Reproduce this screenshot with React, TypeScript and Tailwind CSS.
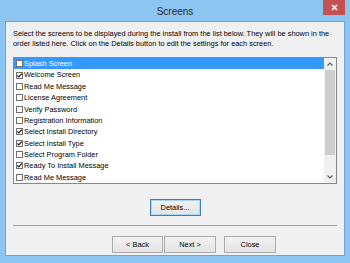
import { ReactNode } from "react";

type Screen = { name: string; checked: boolean };

const screens: Screen[] = [
  { name: "Splash Screen", checked: false },
  { name: "Welcome Screen", checked: true },
  { name: "Read Me Message", checked: false },
  { name: "License Agreement", checked: false },
  { name: "Verify Password", checked: false },
  { name: "Registration Information", checked: false },
  { name: "Select Install Directory", checked: true },
  { name: "Select Install Type", checked: true },
  { name: "Select Program Folder", checked: false },
  { name: "Ready To Install Message", checked: true },
  { name: "Read Me Message", checked: false },
];

function CheckBox({ checked }: { checked: boolean }) {
  return (
    <div className="w-[7px] h-[7px] border border-[#707070] bg-white flex items-center justify-center shrink-0">
      {checked && (
        <svg width="5" height="5" viewBox="0 0 5 5">
          <path d="M0.3 2.4 L1.8 3.9 L4.7 0.6" stroke="#1a1a1a" strokeWidth="1.2" fill="none" />
        </svg>
      )}
    </div>
  );
}

function Button({ children, focused, className }: { children: ReactNode; focused?: boolean; className?: string }) {
  return (
    <button
      className={
        "h-[17px] flex items-center justify-center text-[7.4px] text-black border bg-gradient-to-b from-[#f2f2f2] to-[#e3e3e3] " +
        (focused ? "border-[#3c7fb1] shadow-[inset_0_0_0_1px_#a8d4f5] " : "border-[#acacac] ") +
        (className ?? "")
      }
    >
      {children}
    </button>
  );
}

export default function App() {
  return (
    <div className="w-[350px] h-[263px] bg-[#8cc4f2] flex flex-col font-['Liberation_Sans',Arial,sans-serif] overflow-hidden">
      <div className="h-[21px] relative flex items-center justify-center shrink-0">
        <span className="text-[10px] text-[#2b2b2b] mt-[1px]">Screens</span>
        <div className="absolute right-[5px] top-0 w-[22px] h-[15px] bg-[#c75050] flex items-center justify-center">
          <svg width="7" height="7" viewBox="0 0 7 7">
            <path d="M1 1 L6 6 M6 1 L1 6" stroke="#ffffff" strokeWidth="1.5" />
          </svg>
        </div>
      </div>

      <div className="mx-[5px] h-[235px] border border-[#6da3d6] bg-[#f0f0f0] flex flex-col">
        <p className="px-[7px] pt-[7px] text-[7.4px] leading-[10px] text-black">
          Select the screens to be displayed during the install from the list below. They will be shown in the order listed here. Click on the Details button to edit the settings for each screen.
        </p>

        <div className="mx-[7px] mt-[8px] h-[127px] border border-[#828790] bg-white flex">
          <div className="flex-1 flex flex-col">
            {screens.map((s, i) => (
              <div
                key={i}
                className={
                  "h-[11.4px] flex items-center gap-[1px] pl-[2px] text-[7.4px] " +
                  (i === 0 ? "bg-[#3399ff] text-white" : "text-black")
                }
              >
                <CheckBox checked={s.checked} />
                <span>{s.name}</span>
              </div>
            ))}
          </div>
          <div className="w-[12px] bg-[#f0f0f0] flex flex-col">
            <div className="h-[12px] flex items-center justify-center">
              <svg width="6" height="4" viewBox="0 0 6 4">
                <path d="M0.5 3.5 L3 1 L5.5 3.5" stroke="#606060" strokeWidth="1.2" fill="none" />
              </svg>
            </div>
            <div className="mx-[1px] h-[85px] bg-[#cdcdcd]" />
            <div className="flex-1" />
            <div className="h-[12px] flex items-center justify-center">
              <svg width="6" height="4" viewBox="0 0 6 4">
                <path d="M0.5 0.5 L3 3 L5.5 0.5" stroke="#606060" strokeWidth="1.2" fill="none" />
              </svg>
            </div>
          </div>
        </div>

        <div className="flex justify-center mt-[15px]">
          <Button focused className="w-[51px] h-[15px]">Details...</Button>
        </div>

        <div className="mx-[7px] mt-[9px] h-[2px] border-t border-[#a0a0a0] border-b-white" />

        <div className="flex pl-[106px] mt-[9px]">
          <Button className="w-[51px]">&lt; Back</Button>
          <Button className="w-[52px] ml-[1px]">Next &gt;</Button>
          <Button className="w-[52px] ml-[8px]">Close</Button>
        </div>
      </div>
    </div>
  );
}
